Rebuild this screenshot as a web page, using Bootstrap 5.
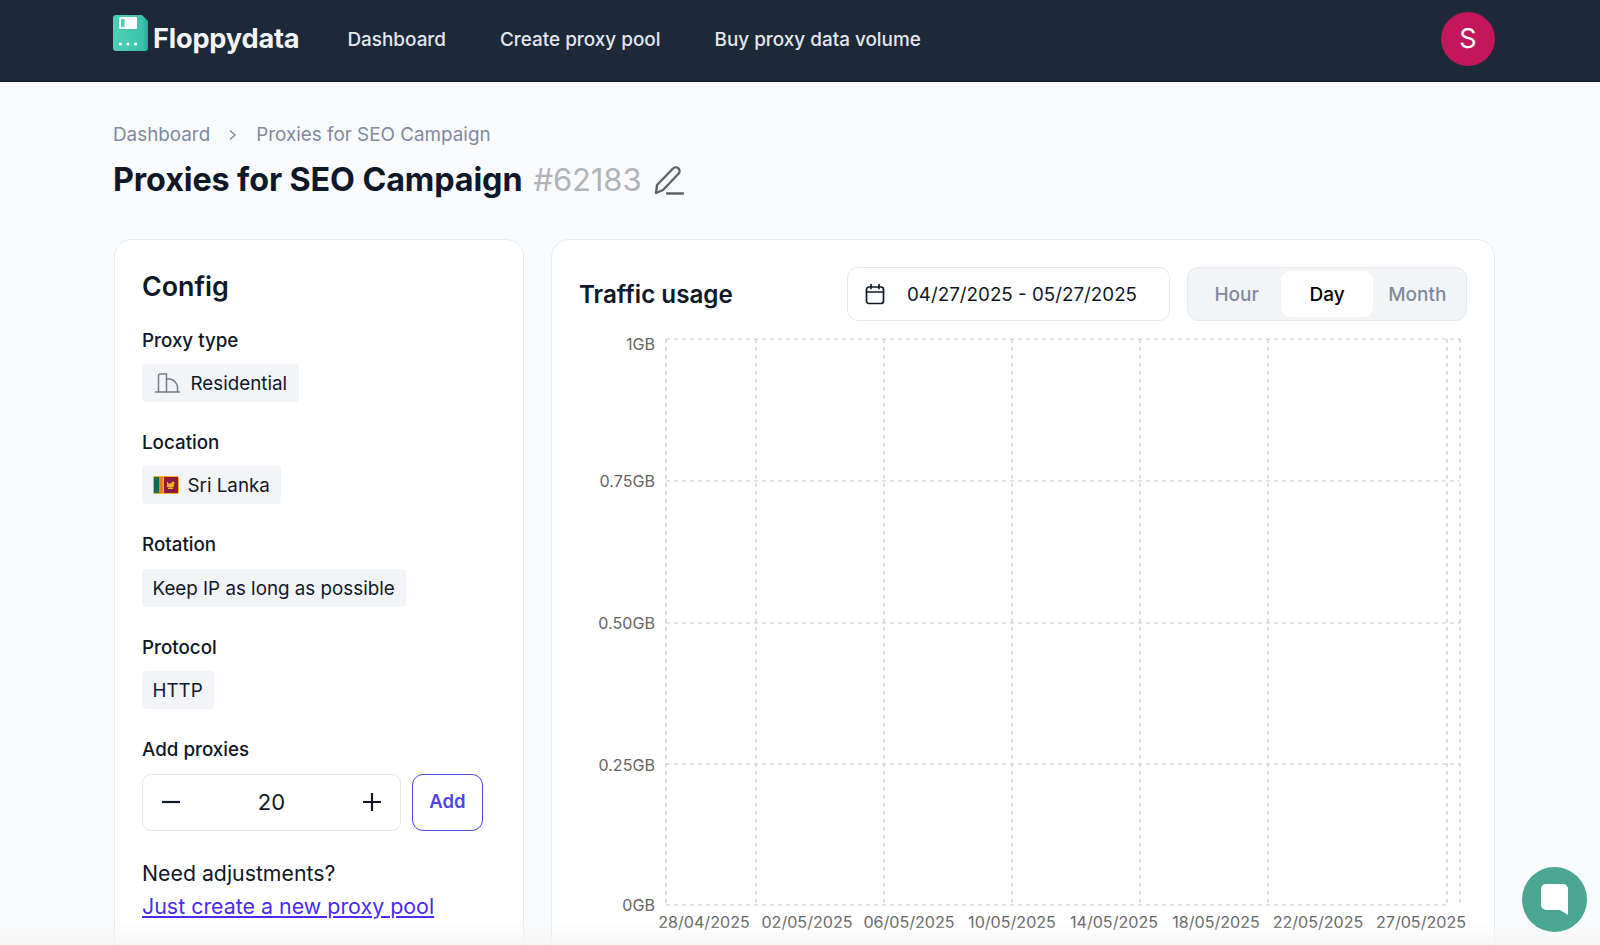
<!DOCTYPE html>
<html lang="en">

<head>
    <meta charset="UTF-8">
    <meta name="viewport" content="width=device-width, initial-scale=1.0">
    <title>Proxies for SEO Campaign</title>
    <!-- Bootstrap CSS -->
    <link href="https://cdn.jsdelivr.net/npm/bootstrap@5.3.0/dist/css/bootstrap.min.css" rel="stylesheet">
    <style>
        html, body { height: 100%; overflow: hidden; }
        body { background: #f9fafc; font-family: "Inter", "Liberation Sans", sans-serif; color: #101828; font-size: 18px; }
        .top-bar { background: #1d2939; height: 82px; padding: 0 105px 1px 113px; border-bottom: 1px solid #101828; }
        .brand-name { font-size: 27.2px; font-weight: 700; color: #f2f4f7; letter-spacing: -.2px; }
        .top-bar .navbar-brand { margin: 0 40px 2px 0; padding: 0; gap: 5px; }
        .brand-logo { margin-bottom: 13px; }
        .top-bar .nav-link { color: #e4e7ec; font-size: 18.9px; font-weight: 500; margin-right: 38px; }
        .avatar-circle { width: 54px; height: 54px; margin-bottom: 2px; background: #c2185b; color: #fff; font-size: 27px; }
        .page-wrap { padding: 40px 105px 0 113px; height: calc(100vh - 82px); overflow: hidden; }
        .crumbs { font-size: 18.85px; margin-bottom: 9.5px; line-height: 26px; }
        .crumbs a, .crumbs .breadcrumb-item { color: #808a9d; text-decoration: none; }
        .crumbs .breadcrumb-item + .breadcrumb-item { padding-left: 0; }
        .crumbs .breadcrumb-item + .breadcrumb-item::before { display: none; }
        .crumbs .crumb-sep { margin: 0 19px 0 18px; }
        .page-title { font-size: 32.3px; font-weight: 700; line-height: 44px; margin-bottom: 37.5px; letter-spacing: -.1px; }
        .page-title .pool-id { color: #b0b3b8; font-size: 31px; font-weight: 400; margin-left: 11px; }
        .page-title .edit-icon { margin-left: 11px; }
        .panels { display: grid; grid-template-columns: 410px 944px; gap: 27px; margin-left: 1px; }
        .panel-card { border: 1px solid #e9eaee; border-radius: 18px; background: #fff; height: 760px; }
        .config-body { padding: 28px 27px 27px; }
        .chart-body { padding: 27px 27px 27px; }
        .panel-title { font-size: 26.8px; font-weight: 600; line-height: 36px; margin-bottom: 25px; }
        .field-label { font-size: 18.8px; font-weight: 500; line-height: 24.5px; margin-bottom: 11px; }
        .field-label.first-field { margin-bottom: 10px; }
        .value-chip { display: inline-flex; align-items: center; background: #f2f4f7; border-radius: 4px; height: 38px; padding: 3px 11.5px 0 10.5px; font-size: 18.8px; color: #101828; }
        .chip-icon { margin-right: 9px; margin-top: -3px; }
        .config-item { margin-bottom: 29px; }
        .stepper { width: 259px; height: 57px; border: 1px solid #e6e8ee; border-radius: 9px; padding: 0 17px; font-size: 22px; }
        .add-btn { width: 71px; height: 57px; margin-left: 3px; border: 1px solid #4f46e5; border-radius: 11px; color: #4f46e5; font-size: 18.5px; font-weight: 600; background: #fff; padding: 0; }
        .need-text { font-size: 21.3px; line-height: 33px; margin-top: 26px; }
        .new-pool-link { font-size: 21.4px; line-height: 32px; color: #4a2cf5; }
        .chart-title { font-size: 24.2px; font-weight: 600; margin-top: 2px; }
        .date-box { width: 323px; height: 54px; border: 1px solid #e6e8ee; border-radius: 11px; padding: 2px 17px 0; gap: 22px; font-size: 18.8px; margin-right: 17px; white-space: nowrap; }
        .date-box svg { margin-top: -2px; }
        .range-group { width: 280px; height: 54px; background: #f3f4f6; border: 1px solid #e6e8ee; border-radius: 11px; padding: 3px; }
        .range-group .btn { flex: 1 1 0; border: 0; padding: 2px 0 0; font-size: 19px; font-weight: 500; color: #808a9d; border-radius: 9px !important; }
        .range-group .btn.active { background: #fff; color: #000; }
        .chart-svg { display: block; margin-top: 9px; }
        .chart-svg line { stroke: #c8c8c8; stroke-width: 1.2; stroke-dasharray: 4 4; }
        .chart-svg text { font-family: "Inter", "Liberation Sans", sans-serif; font-size: 16.1px; fill: #666; }
        .chat-bubble { position: fixed; right: 13px; bottom: 13px; width: 65px; height: 65px; background: #4ba593; z-index: 5; }
        .bottom-fade { position: fixed; left: 0; right: 0; bottom: 0; height: 22px; background: linear-gradient(rgba(245,245,245,0), rgba(245,245,245,.9)); z-index: 4; }
    </style>
</head>

<body>
    <nav class="navbar navbar-expand top-bar">
        <a class="navbar-brand d-flex align-items-center" href="#">
            <svg class="brand-logo" width="35" height="36" viewBox="0 0 35 36">
                <defs>
                    <linearGradient id="logoFill" x1="0" x2="1" y1="0" y2="0">
                        <stop offset="0" stop-color="#4fcfb5" />
                        <stop offset=".85" stop-color="#3cc2aa" />
                        <stop offset="1" stop-color="#1fae98" />
                    </linearGradient>
                </defs>
                <path d="M3 0H29L35 6V33a3 3 0 0 1-3 3H3a3 3 0 0 1-3-3V3a3 3 0 0 1 3-3Z" fill="url(#logoFill)" />
                <rect x="6" y="2" width="18" height="12" rx="1" fill="#fff" />
                <rect x="8" y="4" width="3.5" height="8" fill="#4fcfb5" />
                <circle cx="7.5" cy="29" r="1.6" fill="#fff" />
                <circle cx="15" cy="29" r="1.6" fill="#fff" />
                <circle cx="22.5" cy="29" r="1.6" fill="#fff" />
            </svg>
            <span class="brand-name">Floppydata</span>
        </a>
        <div class="navbar-nav">
            <a class="nav-link" href="#">Dashboard</a>
            <a class="nav-link" href="#">Create proxy pool</a>
            <a class="nav-link" href="#">Buy proxy data volume</a>
        </div>
        <div class="avatar-circle rounded-circle d-flex align-items-center justify-content-center ms-auto">S</div>
    </nav>

    <div class="page-wrap">
        <nav aria-label="breadcrumb">
            <ol class="breadcrumb crumbs">
                <li class="breadcrumb-item"><a href="#">Dashboard</a></li>
                <li class="breadcrumb-item d-flex align-items-center">
                    <svg class="crumb-sep" width="9" height="12" viewBox="0 0 9 12" fill="none" stroke="#808a9d" stroke-width="1.4">
                        <path d="M2 1.5 7 6l-5 4.5" />
                    </svg>
                    Proxies for SEO Campaign
                </li>
            </ol>
        </nav>

        <h1 class="page-title d-flex align-items-center">
            Proxies for SEO Campaign
            <span class="pool-id">#62183</span>
            <svg class="edit-icon" width="32" height="32" viewBox="0 0 32 32" fill="none" stroke="#5d6168" stroke-width="2.3" stroke-linecap="round" stroke-linejoin="round">
                <path d="M3 29 4 21 20 4.500a3.700 3.700 0 0 1 5.500 5.200L10 26Z" />
                <path d="M14 29.500H30" />
            </svg>
        </h1>

        <div class="panels">
            <div class="card panel-card">
                <div class="card-body config-body">
                    <div class="panel-title">Config</div>

                    <div class="config-item">
                        <div class="field-label first-field">Proxy type</div>
                        <span class="value-chip">
                            <svg class="chip-icon" width="29" height="24" viewBox="0 0 28 24" fill="none" stroke="#777c85" stroke-width="1.5" stroke-linecap="round">
                                <path d="M2 21H26" />
                                <path d="M5 21V5a2 2 0 0 1 2-2H13V21" />
                                <path d="M13 8H17Q23 10 24 16V21" />
                            </svg>
                            Residential
                        </span>
                    </div>

                    <div class="config-item">
                        <div class="field-label">Location</div>
                        <span class="value-chip">
                            <svg class="chip-icon" width="26" height="18" viewBox="0 0 26 18">
                                <rect width="26" height="18" rx="2" fill="#f7b01c" />
                                <rect x="1" y="1" width="5" height="16" fill="#0f6b50" />
                                <rect x="6" y="1" width="4" height="16" fill="#f47a20" />
                                <rect x="11" y="1" width="14" height="16" fill="#8d1b3d" />
                                <ellipse cx="17.500" cy="9.500" rx="3.500" ry="2.200" fill="#f7b01c" />
                                <circle cx="20" cy="7" r="1.500" fill="#f7b01c" />
                                <path d="M14.500 6V11M15 12.500H20" stroke="#f7b01c" />
                            </svg>
                            Sri Lanka
                        </span>
                    </div>

                    <div class="config-item">
                        <div class="field-label">Rotation</div>
                        <span class="value-chip">Keep IP as long as possible</span>
                    </div>

                    <div class="config-item">
                        <div class="field-label">Protocol</div>
                        <span class="value-chip">HTTP</span>
                    </div>

                    <div class="field-label">Add proxies</div>
                    <div class="d-flex gap-2 align-items-center">
                        <div class="stepper d-flex align-items-center justify-content-between">
                            <svg width="22" height="22" viewBox="0 0 22 22" stroke="#101828" stroke-width="2.200">
                                <path d="M2 11H20" />
                            </svg>
                            <span>20</span>
                            <svg width="22" height="22" viewBox="0 0 22 22" stroke="#101828" stroke-width="2.200">
                                <path d="M2 11H20M11 2V20" />
                            </svg>
                        </div>
                        <button type="button" class="btn add-btn">Add</button>
                    </div>

                    <div class="need-text">Need adjustments?</div>
                    <a class="new-pool-link" href="#">Just create a new proxy pool</a>
                </div>
            </div>

            <div class="card panel-card">
                <div class="card-body chart-body">
                    <div class="d-flex align-items-center">
                        <div class="chart-title me-auto">Traffic usage</div>
                        <div class="date-box d-flex align-items-center">
                            <svg width="20" height="22" viewBox="0 0 20 22" fill="none" stroke="#101828" stroke-width="1.700" stroke-linecap="round">
                                <rect x="1.500" y="4" width="17" height="16.500" rx="2.500" />
                                <path d="M1.500 9H18.500M6 1.500V5.500M14 1.500V5.500" />
                            </svg>
                            <span>04/27/2025 - 05/27/2025</span>
                        </div>
                        <div class="btn-group range-group" role="group">
                            <button type="button" class="btn">Hour</button>
                            <button type="button" class="btn active">Day</button>
                            <button type="button" class="btn">Month</button>
                        </div>
                    </div>

                    <svg class="chart-svg" width="888" height="610" viewBox="0 0 888 610">
                        <line x1="87" x2="881" y1="9" y2="9" />
                        <line x1="87" x2="881" y1="151" y2="151" />
                        <line x1="87" x2="881" y1="293" y2="293" />
                        <line x1="87" x2="881" y1="434" y2="434" />
                        <line x1="87" x2="869" y1="575" y2="575" />
                        <line x1="87" x2="87" y1="9" y2="575" />
                        <line x1="177" x2="177" y1="9" y2="575" />
                        <line x1="305" x2="305" y1="9" y2="575" />
                        <line x1="433" x2="433" y1="9" y2="575" />
                        <line x1="561" x2="561" y1="9" y2="575" />
                        <line x1="689" x2="689" y1="9" y2="575" />
                        <line x1="868" x2="868" y1="9" y2="575" />
                        <line x1="881" x2="881" y1="9" y2="575" />
                        <text x="76" y="20" text-anchor="end">1GB</text>
                        <text x="76" y="157" text-anchor="end">0.75GB</text>
                        <text x="76" y="299" text-anchor="end">0.50GB</text>
                        <text x="76" y="441" text-anchor="end">0.25GB</text>
                        <text x="76" y="581" text-anchor="end">0GB</text>
                        <text x="125" y="598" text-anchor="middle">28/04/2025</text>
                        <text x="228" y="598" text-anchor="middle">02/05/2025</text>
                        <text x="330" y="598" text-anchor="middle">06/05/2025</text>
                        <text x="433" y="598" text-anchor="middle">10/05/2025</text>
                        <text x="535" y="598" text-anchor="middle">14/05/2025</text>
                        <text x="637" y="598" text-anchor="middle">18/05/2025</text>
                        <text x="739" y="598" text-anchor="middle">22/05/2025</text>
                        <text x="842" y="598" text-anchor="middle">27/05/2025</text>
                    </svg>
                </div>
            </div>
        </div>
    </div>

    <div class="bottom-fade"></div>
    <div class="chat-bubble rounded-circle d-flex align-items-center justify-content-center">
        <svg width="29" height="33" viewBox="0 0 29 33">
            <path d="M6 1H23a5 5 0 0 1 5 5V32L20 27H6a5 5 0 0 1-5-5V6a5 5 0 0 1 5-5Z" fill="#fff" />
        </svg>
    </div>

    <!-- Bootstrap JS -->
    <script src="https://cdn.jsdelivr.net/npm/bootstrap@5.3.0/dist/js/bootstrap.bundle.min.js"></script>
</body>

</html>
